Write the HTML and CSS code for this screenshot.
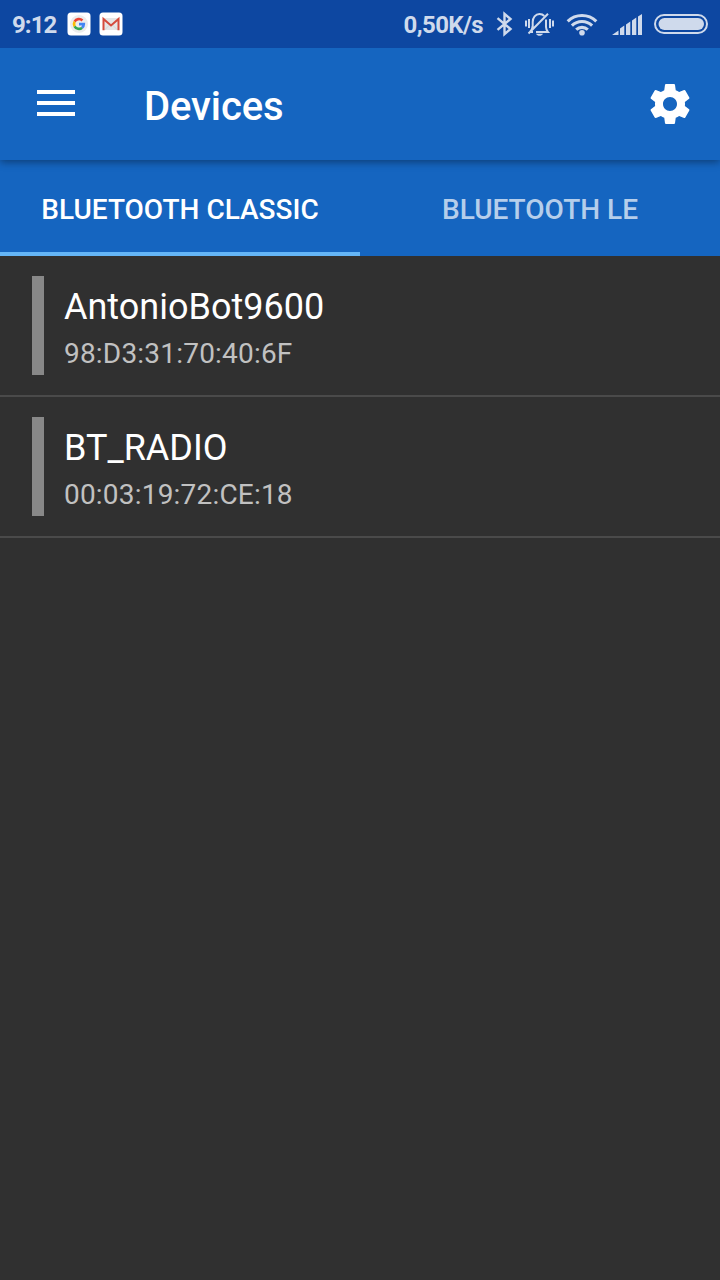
FILE: index.html
```html
<!DOCTYPE html>
<html lang="en">
<head>
  <meta charset="UTF-8" />
  <title>Devices</title>
  <link rel="stylesheet" href="styles.css">
</head>
<body>
  <div class="status-bar">
    <span class="clock">9:12</span>
    <svg class="app-icon google" width="24" height="24" viewBox="0 0 24 24">
      <rect x=".5" y=".5" width="23" height="23" rx="3.500" fill="#fff"/>
      <circle cx="12" cy="12" r="9" fill="#ececec"/>
      <g fill="none" stroke-width="2.600">
        <path d="M15.400 8.500A4.900 4.900 0 0 0 7.600 9.700" stroke="#ea4335"/>
        <path d="M7.600 9.700a4.900 4.900 0 0 0 0 4.600" stroke="#fbbc05"/>
        <path d="M7.600 14.300a4.900 4.900 0 0 0 7.500 1.400" stroke="#34a853"/>
        <path d="M15.100 15.700a4.900 4.900 0 0 0 1.700-3.600H12" stroke="#4285f4"/>
      </g>
    </svg>
    <svg class="app-icon gmail" width="24" height="24" viewBox="0 0 24 24">
      <rect x=".5" y=".5" width="23" height="23" rx="3.500" fill="#fff"/>
      <path d="M4 6h16v12H4z" fill="#e6e6e6"/>
      <path d="M5.500 18l5-5M18.500 18l-5-5" stroke="#cfcfcf" stroke-width=".7"/>
      <path d="M4.500 18.300V7l7.500 6.500L19.500 7v11.300" fill="none" stroke="#d54b3d" stroke-width="2"/>
    </svg>

    <span class="speed">0,50K/s</span>
    <svg class="bluetooth" width="18" height="26" viewBox="0 0 18 26">
      <path d="M2.500 7.200l13 10.800-6 5.200V2.800l6 5.200L2.500 18.800" fill="none" stroke="currentColor" stroke-width="2.400"/>
    </svg>
    <svg class="silent" width="30" height="26" viewBox="0 0 30 26">
      <g fill="none" stroke="currentColor" stroke-width="2">
        <path d="M8.700 15.500V11c0-4.500 2.800-8 6.800-8 2 0 3.600.7 4.800 2M22 8.500V16c0 2.200.8 3.500 2 5H12"/>
        <path d="M4.500 22.500L24 2.700M8.700 15c-.2 2.500-1 4-2.700 6h3"/>
        <path d="M2 9.500v6M5 8v9M26 8v9M29 9.500v6"/>
      </g>
      <path d="M12 22.700h7c-.8 1.500-2 2-3.500 2s-2.700-.5-3.500-2z" fill="currentColor"/>
    </svg>
    <svg class="wifi" width="32" height="24" viewBox="0 0 32 24">
      <g fill="none" stroke="currentColor" stroke-width="3.100">
        <path d="M1.700 9.300a20.500 20.500 0 0 1 28.600 0"/>
        <path d="M5.900 13.600a14.500 14.500 0 0 1 20.200 0"/>
        <path d="M10.200 17.700a8.500 8.500 0 0 1 11.600 0"/>
      </g>
      <circle cx="16" cy="20.700" r="2.800" fill="currentColor"/>
    </svg>
    <svg class="signal" width="30" height="22" viewBox="0 0 30 22">
      <path d="M0 21l6.500-4.500V21zM8 21v-6.500l4.300-3V21zM14 21V10.500l4.300-3V21zM20 21V6.500l4.300-3V21zM26 21V2.500L30 0v21z" fill="currentColor"/>
    </svg>
    <svg class="battery" width="54" height="20" viewBox="0 0 54 20">
      <rect x="1" y="1" width="52" height="18" rx="9" fill="none" stroke="currentColor" stroke-width="2"/>
      <rect x="4.500" y="4" width="45.500" height="12" rx="6" fill="currentColor"/>
    </svg>
  </div>

  <header>
    <svg class="menu-icon" width="38" height="28" viewBox="0 0 38 28">
      <path d="M0 3h38M0 14h38M0 25h38" stroke="#fff" stroke-width="4"/>
    </svg>
    <h1>Devices</h1>
    <svg class="settings-icon" width="48" height="48" viewBox="0 0 24 24">
      <path fill="#fff" d="M19.430 12.980c.040-.320.070-.640.070-.980s-.030-.660-.070-.980l2.110-1.650c.190-.150.240-.420.120-.640l-2-3.460c-.120-.220-.390-.300-.610-.220l-2.490 1c-.520-.400-1.080-.730-1.690-.980l-.380-2.650C14.460 2.180 14.250 2 14 2h-4c-.250 0-.460.180-.490.420l-.380 2.650c-.610.250-1.170.590-1.690.980l-2.490-1c-.230-.090-.490 0-.610.220l-2 3.460c-.130.220-.070.490.120.640l2.110 1.650c-.040.320-.070.650-.070.980s.030.660.070.980l-2.110 1.650c-.190.150-.240.420-.120.640l2 3.460c.120.220.390.300.610.220l2.490-1c.520.400 1.080.730 1.690.980l.380 2.650c.030.240.240.420.490.420h4c.250 0 .460-.180.490-.420l.380-2.650c.610-.250 1.170-.590 1.690-.980l2.490 1c.230.090.490 0 .610-.220l2-3.460c.120-.220.070-.490-.120-.640l-2.110-1.650zM12 15.500c-1.930 0-3.500-1.570-3.500-3.500s1.570-3.500 3.500-3.500 3.500 1.570 3.500 3.500-1.570 3.500-3.500 3.500z"/>
    </svg>
  </header>

  <nav class="tabs">
    <div class="tab active">BLUETOOTH CLASSIC</div>
    <div class="tab">BLUETOOTH LE</div>
  </nav>

  <main>
    <div class="device">
      <div class="marker"></div>
      <div class="info">
        <div class="name">AntonioBot9600</div>
        <div class="address">98:D3:31:70:40:6F</div>
      </div>
    </div>
    <div class="device">
      <div class="marker"></div>
      <div class="info">
        <div class="name">BT_RADIO</div>
        <div class="address">00:03:19:72:CE:18</div>
      </div>
    </div>
  </main>
</body>
</html>
```
FILE: styles.css
```css
* {
  margin: 0;
  padding: 0;
  box-sizing: border-box;
}

body {
  font-family: Roboto, sans-serif;
  background: #303030;
  color: white;
  min-height: 100vh;
}

svg {
  display: block;
  flex-shrink: 0;
}

.status-bar {
  height: 48px;
  padding: 0 12px;
  background: #0d47a1;
  color: #cfdaec;
  display: flex;
  align-items: center;
  position: relative;
  z-index: 1;
  font-size: 24px;
  font-weight: 700;
}

.clock {
  width: 55px;
  white-space: nowrap;
  letter-spacing: -0.9px;
}

.clock, .speed {
  padding-top: 2px;
}

.gmail {
  margin-left: 8px;
}

.speed {
  margin-left: auto;
  letter-spacing: -0.6px;
}

.bluetooth {
  margin-left: 12px;
}

.silent {
  margin-left: 11px;
}

.wifi {
  margin-left: 12px;
}

.signal {
  margin: 1px 0 0 14px;
}

.battery {
  margin-left: 12px;
}

header {
  height: 112px;
  padding: 0 26px 0 37px;
  background: #1565c0;
  display: flex;
  align-items: center;
  position: relative;
  box-shadow: 0 2px 8px rgba(0, 0, 0, 0.4);
}

header h1 {
  margin: 4px 0 0 69px;
  font-size: 40px;
  font-weight: 500;
  letter-spacing: -0.1px;
}

.menu-icon {
  margin-top: -2px;
}

.settings-icon {
  margin-left: auto;
}

.tabs {
  display: flex;
  height: 96px;
  background: #1565c0;
}

.tab {
  flex: 1;
  padding-top: 7px;
  border-bottom: 4px solid transparent;
  display: flex;
  align-items: center;
  justify-content: center;
  font-size: 28px;
  font-weight: 500;
  color: rgba(255, 255, 255, 0.7);
}

.tab.active {
  color: white;
  border-bottom-color: #64b5f6;
}

.device {
  display: flex;
  gap: 20px;
  height: 141px;
  padding: 20px 32px;
  border-bottom: 2px solid #4a4a4a;
}

.marker {
  width: 12px;
  background: #888;
}

.info {
  padding-top: 10px;
}

.name {
  font-size: 36px;
  line-height: 43px;
}

.address {
  margin-top: 8px;
  font-size: 28px;
  line-height: 33px;
  letter-spacing: 0.2px;
  color: #c1c1c1;
}
```
